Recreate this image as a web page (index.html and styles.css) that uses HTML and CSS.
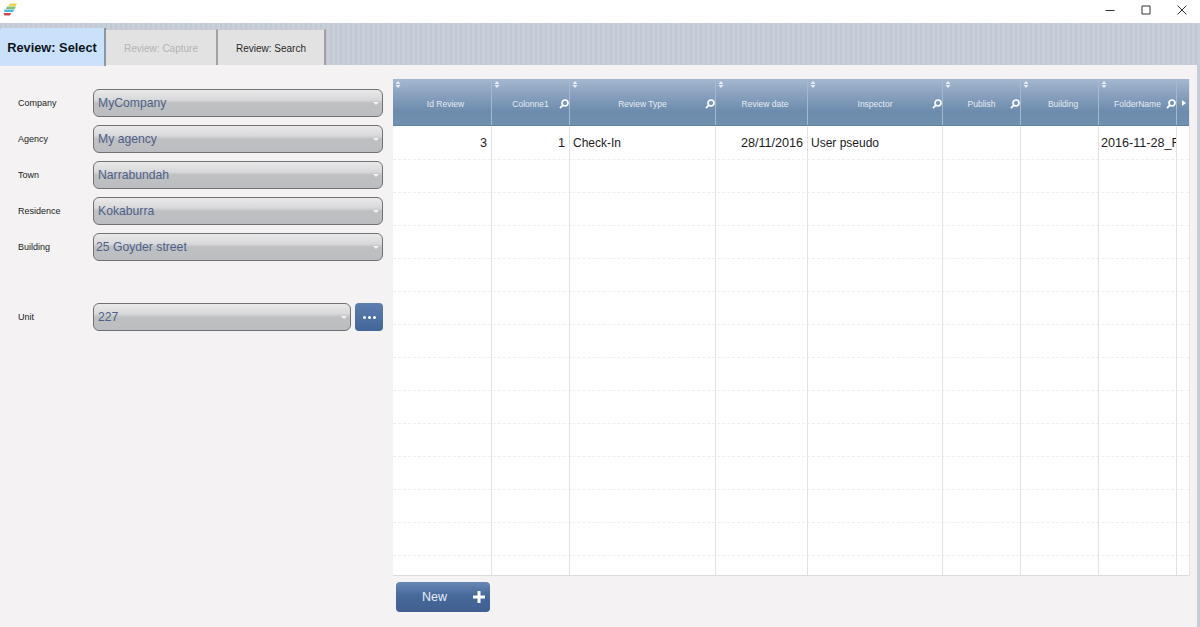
FILE: index.html
```html
<!DOCTYPE html>
<html lang="en">
<head>
<meta charset="utf-8">
<title>Review</title>
<link rel="stylesheet" href="styles.css">
</head>
<body>
<div class="window">
  <header class="titlebar">
    <svg class="logo" width="14" height="13" viewBox="0 0 14 13">
      <path class="l1" d="M7 0.5h7l-1.5 2.5h-7z"/>
      <path class="l2" d="M4 3.5h9l-1.5 2.5h-8.500z"/>
      <path class="l3" d="M1.500 6.500h10l-1.500 2.500h-9z"/>
      <path class="l4" d="M0.500 10h7.500l-1 2.500h-5.500z"/>
    </svg>
    <div class="winbtns">
      <svg width="12" height="12" viewBox="0 0 12 12"><path d="M1.500 6.500h9" /></svg>
      <svg width="12" height="12" viewBox="0 0 12 12"><path d="M2 2h8v8h-8z" /></svg>
      <svg width="12" height="12" viewBox="0 0 12 12"><path d="M1.500 1.500l9 9M10.500 1.500l-9 9" /></svg>
    </div>
  </header>
  <nav class="tabs">
    <div class="tab tab-active">Review: Select</div>
    <div class="tab tab-disabled">Review: Capture</div>
    <div class="tab tab-normal">Review: Search</div>
  </nav>
  <main class="panel">
    <section class="form">
      <div class="field"><span class="label">Company</span><div class="select pad-wide">MyCompany<i class="caret"></i></div></div>
      <div class="field"><span class="label">Agency</span><div class="select pad-wide">My agency<i class="caret"></i></div></div>
      <div class="field"><span class="label">Town</span><div class="select pad-wide">Narrabundah<i class="caret"></i></div></div>
      <div class="field"><span class="label">Residence</span><div class="select pad-wide">Kokaburra<i class="caret"></i></div></div>
      <div class="field"><span class="label">Building</span><div class="select">25 Goyder street<i class="caret"></i></div></div>
      <div class="field field-unit"><span class="label">Unit</span><div class="select pad-wide">227<i class="caret"></i></div><button class="more" type="button"><i></i><i></i><i></i></button></div>
    </section>
    <section class="grid-area">
      <div class="grid">
        <div class="head">
          <div class="hcell hcell-plain"><svg class="sort" viewBox="0 0 6 7"><path d="M3 0l2.500 3h-5zM3 7l-2.500-3h5z"/></svg><span>Id Review</span></div>
          <div class="hcell"><svg class="sort" viewBox="0 0 6 7"><path d="M3 0l2.500 3h-5zM3 7l-2.500-3h5z"/></svg><span>Colonne1</span><svg class="find" viewBox="0 0 10 10"><circle cx="6" cy="4" r="3"/><path d="M3.800 6.200l-2.800 3"/></svg></div>
          <div class="hcell"><svg class="sort" viewBox="0 0 6 7"><path d="M3 0l2.500 3h-5zM3 7l-2.500-3h5z"/></svg><span>Review Type</span><svg class="find" viewBox="0 0 10 10"><circle cx="6" cy="4" r="3"/><path d="M3.800 6.200l-2.800 3"/></svg></div>
          <div class="hcell hcell-plain"><svg class="sort" viewBox="0 0 6 7"><path d="M3 0l2.500 3h-5zM3 7l-2.500-3h5z"/></svg><span>Review date</span></div>
          <div class="hcell"><svg class="sort" viewBox="0 0 6 7"><path d="M3 0l2.500 3h-5zM3 7l-2.500-3h5z"/></svg><span>Inspector</span><svg class="find" viewBox="0 0 10 10"><circle cx="6" cy="4" r="3"/><path d="M3.800 6.200l-2.800 3"/></svg></div>
          <div class="hcell"><svg class="sort" viewBox="0 0 6 7"><path d="M3 0l2.500 3h-5zM3 7l-2.500-3h5z"/></svg><span>Publish</span><svg class="find" viewBox="0 0 10 10"><circle cx="6" cy="4" r="3"/><path d="M3.800 6.200l-2.800 3"/></svg></div>
          <div class="hcell hcell-plain"><svg class="sort" viewBox="0 0 6 7"><path d="M3 0l2.500 3h-5zM3 7l-2.500-3h5z"/></svg><span>Building</span></div>
          <div class="hcell"><svg class="sort" viewBox="0 0 6 7"><path d="M3 0l2.500 3h-5zM3 7l-2.500-3h5z"/></svg><span>FolderName</span><svg class="find" viewBox="0 0 10 10"><circle cx="6" cy="4" r="3"/><path d="M3.800 6.200l-2.800 3"/></svg></div>
          <div class="hcell hcell-end"><svg class="next" viewBox="0 0 4 6"><path d="M0 0l4 3-4 3z"/></svg></div>
        </div>
        <div class="body">
          <div class="row">
            <div class="cell num">3</div><div class="cell num">1</div><div class="cell">Check-In</div><div class="cell num">28/11/2016</div><div class="cell">User pseudo</div><div class="cell"></div><div class="cell"></div><div class="cell clip">2016-11-28_Flat</div><div class="cell"></div>
          </div>
          <div class="row"><div class="cell"></div><div class="cell"></div><div class="cell"></div><div class="cell"></div><div class="cell"></div><div class="cell"></div><div class="cell"></div><div class="cell"></div><div class="cell"></div></div>
          <div class="row"><div class="cell"></div><div class="cell"></div><div class="cell"></div><div class="cell"></div><div class="cell"></div><div class="cell"></div><div class="cell"></div><div class="cell"></div><div class="cell"></div></div>
          <div class="row"><div class="cell"></div><div class="cell"></div><div class="cell"></div><div class="cell"></div><div class="cell"></div><div class="cell"></div><div class="cell"></div><div class="cell"></div><div class="cell"></div></div>
          <div class="row"><div class="cell"></div><div class="cell"></div><div class="cell"></div><div class="cell"></div><div class="cell"></div><div class="cell"></div><div class="cell"></div><div class="cell"></div><div class="cell"></div></div>
          <div class="row"><div class="cell"></div><div class="cell"></div><div class="cell"></div><div class="cell"></div><div class="cell"></div><div class="cell"></div><div class="cell"></div><div class="cell"></div><div class="cell"></div></div>
          <div class="row"><div class="cell"></div><div class="cell"></div><div class="cell"></div><div class="cell"></div><div class="cell"></div><div class="cell"></div><div class="cell"></div><div class="cell"></div><div class="cell"></div></div>
          <div class="row"><div class="cell"></div><div class="cell"></div><div class="cell"></div><div class="cell"></div><div class="cell"></div><div class="cell"></div><div class="cell"></div><div class="cell"></div><div class="cell"></div></div>
          <div class="row"><div class="cell"></div><div class="cell"></div><div class="cell"></div><div class="cell"></div><div class="cell"></div><div class="cell"></div><div class="cell"></div><div class="cell"></div><div class="cell"></div></div>
          <div class="row"><div class="cell"></div><div class="cell"></div><div class="cell"></div><div class="cell"></div><div class="cell"></div><div class="cell"></div><div class="cell"></div><div class="cell"></div><div class="cell"></div></div>
          <div class="row"><div class="cell"></div><div class="cell"></div><div class="cell"></div><div class="cell"></div><div class="cell"></div><div class="cell"></div><div class="cell"></div><div class="cell"></div><div class="cell"></div></div>
          <div class="row"><div class="cell"></div><div class="cell"></div><div class="cell"></div><div class="cell"></div><div class="cell"></div><div class="cell"></div><div class="cell"></div><div class="cell"></div><div class="cell"></div></div>
          <div class="row"><div class="cell"></div><div class="cell"></div><div class="cell"></div><div class="cell"></div><div class="cell"></div><div class="cell"></div><div class="cell"></div><div class="cell"></div><div class="cell"></div></div>
          <div class="row"><div class="cell"></div><div class="cell"></div><div class="cell"></div><div class="cell"></div><div class="cell"></div><div class="cell"></div><div class="cell"></div><div class="cell"></div><div class="cell"></div></div>
        </div>
      </div>
      <button class="new" type="button"><span>New</span><svg width="12" height="12" viewBox="0 0 12 12"><path d="M6 0v12M0 6h12"/></svg></button>
    </section>
  </main>
</div>
</body>
</html>
```
FILE: styles.css
```css
* { box-sizing: border-box; }
html, body { margin: 0; height: 100%; }
body { font-family: "Liberation Sans", Arial, sans-serif; background: #c5ccd8; overflow: hidden; }
.window { width: 1200px; height: 627px; display: flex; flex-direction: column; overflow: hidden; }

.titlebar { height: 23px; flex: none; background: #fff; display: flex; justify-content: space-between; align-items: flex-start; padding: 3px 0 0 3px; }
.logo { display: block; }
.l1 { fill: #f2d23c; }
.l2 { fill: #7cc46a; }
.l3 { fill: #4fb8dc; }
.l4 { fill: #d8434a; }
.winbtns { display: flex; gap: 24px; padding: 1px 12px 0 0; }
.winbtns svg { display: block; }
.winbtns path { fill: none; stroke: #333; stroke-width: 1; }

.tabs { height: 42px; flex: none; display: flex; align-items: flex-end; background: repeating-linear-gradient(90deg, #bfc8d3 0 2px, #c8cfd9 2px 5px); }
.tab { display: flex; align-items: center; justify-content: center; border-right: 2px solid #a0a0a0; border-top: 1px solid #c9c9c9; background: #e2e2e2; height: 36px; padding-top: 2px; font-size: 10px; }
.tab-active { position: relative; width: 106px; height: 38px; margin-bottom: -1px; padding-top: 0; background: #c9e1fa; border-top: 0; color: #10151c; font-size: 12.800px; font-weight: bold; border-right-color: #8b97a3; border-radius: 3px 0 0 0; }
.tab-disabled { width: 112px; color: #b3b3b3; }
.tab-normal { width: 108px; color: #2b2b2b; }

.panel { flex: 1; min-height: 0; width: 1197px; background: #f4f2f3; display: flex; padding: 14px 7px 0 18px; }

.form { width: 365px; flex: none; display: flex; flex-direction: column; gap: 8px; padding-top: 10px; }
.field { display: flex; align-items: center; height: 28px; gap: 4px; }
.field-unit { margin-top: 34px; }
.label { width: 71px; margin-right: 4px; flex: none; font-size: 9px; color: #222; }
.field > .select { margin-left: -4px; }
.select { position: relative; flex: 1; height: 28px; border: 1px solid #727276; border-radius: 6px; background: linear-gradient(180deg, #eaeaeb 0%, #d8d8da 38%, #bfc0c2 50%, #bcbdc0 100%); color: #4f618a; font-size: 12.200px; line-height: 26px; padding-left: 2px; }
.pad-wide { padding-left: 4px; }
.caret { position: absolute; right: 3px; top: 12px; width: 0; height: 0; border-left: 3px solid transparent; border-right: 3px solid transparent; border-top: 3px solid #f3f3f3; }
.more { width: 28px; height: 28px; flex: none; border: 0; border-radius: 4px; padding: 0; background: linear-gradient(180deg, #5d7fae 0%, #42659a 100%); display: flex; align-items: center; justify-content: center; gap: 2px; }
.more i { width: 3px; height: 3px; background: #fff; border-radius: 50%; display: block; }

.grid-area { flex: 1; min-width: 0; display: flex; flex-direction: column; gap: 6px; align-items: flex-start; margin-left: 10px; }
.grid { width: 797px; height: 497px; flex: none; background: #fff; border-bottom: 1px solid #dcdcdc; border-right: 1px solid #e6e6e6; display: flex; flex-direction: column; overflow: hidden; }
.head, .row { display: grid; grid-template-columns: 99px 78px 146px 92px 135px 78px 78px 78px 13px; }
.head { height: 47px; flex: none; background: linear-gradient(180deg, #a5b8d0 0%, #8ca3c0 30%, #6d8cad 70%, #7190b0 100%); border-bottom: 1px solid #5f80a2; }
.hcell { position: relative; display: flex; align-items: center; justify-content: center; color: #e5ebf3; font-size: 8.500px; padding-top: 3px; border-right: 1px solid #a6b8ce; }
.hcell-plain { padding-left: 7px; }
.hcell-end { border-right: 0; }
.sort { position: absolute; left: 2px; top: 2px; width: 6px; height: 7px; fill: #e9eef5; }
.find { position: absolute; right: 0; top: 20px; width: 10px; height: 10px; fill: none; stroke: #fff; stroke-width: 1.700; }
.next { position: absolute; left: 5px; top: 21px; width: 4px; height: 6px; fill: #fff; }

.body { flex: 1; min-height: 0; overflow: hidden; padding-top: 1px; }
.row { height: 33px; border-bottom: 1px dashed #efefef; }
.cell { height: 33px; margin-bottom: -1px; border-right: 1px solid #e2e2e2; font-size: 12px; line-height: 33px; color: #1d1d1d; padding: 0 3px; white-space: nowrap; overflow: hidden; }
.num { font-size: 12.600px; text-align: right; padding-right: 4px; }
.clip { font-size: 12.600px; padding-left: 2px; padding-right: 1px; text-overflow: clip; }

.new { width: 94px; height: 30px; margin-left: 3px; flex: none; border: 0; border-radius: 4px; padding: 0 5px 0 0; background: linear-gradient(180deg, #6888b4 0%, #47699b 45%, #3f5f90 100%); color: #e8edf4; font: 12.500px "Liberation Sans", Arial, sans-serif; display: flex; align-items: center; justify-content: space-between; }
.new span { margin-left: 26px; }
.new svg { display: block; }
.new path { stroke: #fff; stroke-width: 3; fill: none; }
```
